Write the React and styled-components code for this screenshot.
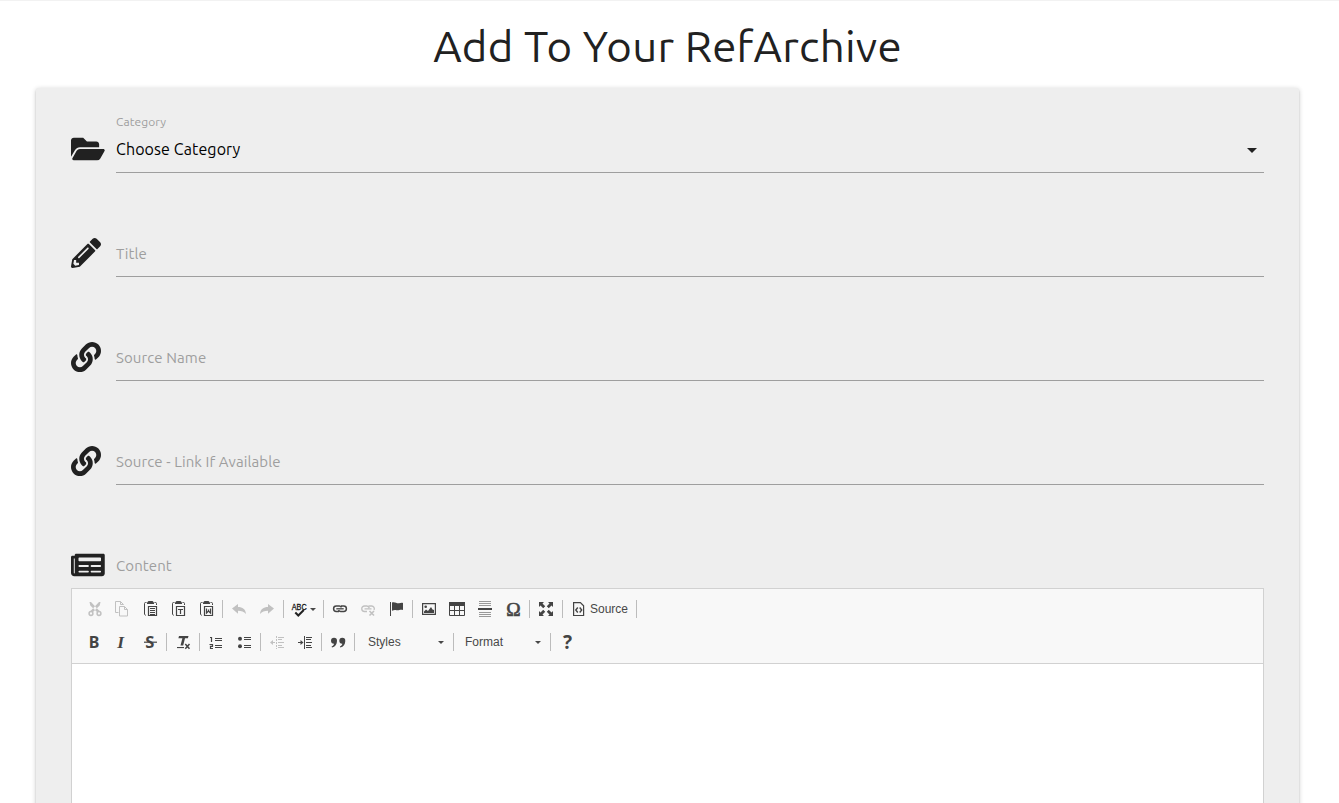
import React from "react";
import styled, { createGlobalStyle } from "styled-components";
import { FaFolderOpen, FaPencilAlt, FaLink, FaNewspaper } from "react-icons/fa";

const GlobalStyle = createGlobalStyle`
  *, *::before, *::after { box-sizing: border-box; }
  html, body { margin: 0; height: 100%; overflow: hidden; background: #fff; }
  body {
    font-family: Ubuntu, "Noto Sans", "Open Sans", sans-serif;
    color: rgba(0, 0, 0, 0.87);
  }
`;

const Page = styled.main`
  height: 803px;
  display: flex;
  flex-direction: column;
  border-top: 1px solid #f2f2f2;
  overflow: hidden;
`;

const PageTitle = styled.h1`
  flex: none;
  margin: 0;
  height: 87px;
  padding: 15px 4px 0 0;
  text-align: center;
  font-size: 43.8px;
  line-height: 60px;
  font-weight: 400;
  letter-spacing: 0.27px;
  color: #212121;
  white-space: nowrap;
`;

const Card = styled.section`
  flex: 0 0 auto;
  height: 900px;
  margin: 0 40px 0 36px;
  padding: 0 35px;
  background: #eee;
  border-radius: 2px;
  box-shadow: 0 2px 2px 0 rgba(0, 0, 0, 0.14), 0 3px 1px -2px rgba(0, 0, 0, 0.12),
    0 1px 5px 0 rgba(0, 0, 0, 0.2);
`;

const Field = styled.div`
  display: flex;
  align-items: flex-end;
  height: ${(p) => p.$height || 104}px;
`;

const Prefix = styled.span`
  flex: 0 0 45px;
  height: ${(p) => (p.$bare ? 38 : 39)}px;
  line-height: 0;
  color: #212121;
  svg {
    height: 30px;
    width: ${(p) => (p.$wide ? 33.75 : 30)}px;
  }
`;

const Control = styled.div`
  flex: 1;
  display: flex;
  flex-direction: column;
  justify-content: flex-end;
  border-bottom: ${(p) => (p.$bare ? "0" : "1px solid #9e9e9e")};
`;

const SmallLabel = styled.label`
  font-size: 12px;
  line-height: 16px;
  color: #9e9e9e;
  letter-spacing: 0.08px;
`;

const Placeholder = styled.label`
  font-size: 15px;
  line-height: 20px;
  padding-bottom: 12px;
  color: #9e9e9e;
  letter-spacing: 0.1px;
`;

const SelectValue = styled.div`
  display: flex;
  align-items: center;
  justify-content: space-between;
  margin-top: 9px;
  padding: 0 7px 13px 0;
  font-size: 16px;
  line-height: 20px;
  color: #000;
  letter-spacing: 0.1px;
`;

const Caret = styled.span`
  width: 0;
  height: 0;
  margin-top: 3px;
  border: 5px solid transparent;
  border-top-color: #212121;
  border-bottom-width: 0;
`;

const Editor = styled.div`
  height: 400px;
  border: 1px solid #d1d1d1;
  background: #fff;
`;

const Toolbar = styled.div`
  height: 75px;
  padding: 7px 8px 0;
  background: #f8f8f8;
  border-bottom: 1px solid #d1d1d1;
`;

const ToolRow = styled.div`
  display: flex;
  align-items: center;
  height: 26px;
  margin-bottom: 7px;
`;

const ToolButton = styled.button`
  display: flex;
  align-items: center;
  width: ${(p) => p.$width || 28}px;
  height: 26px;
  padding: 0 0 0 6px;
  border: 0;
  background: none;
  opacity: ${(p) => (p.$off ? 0.3 : 1)};
  font: 12px "Liberation Sans", Arial, sans-serif;
  color: #484848;
`;

const Separator = styled.span`
  width: 1px;
  height: 18px;
  margin: 0 2px;
  background: #bcbcbc;
`;

const ButtonText = styled.span`
  padding-left: 3px;
`;

const Combo = styled.button`
  display: flex;
  align-items: center;
  justify-content: space-between;
  width: ${(p) => p.$width}px;
  height: 26px;
  padding: 0 ${(p) => p.$right}px 0 ${(p) => p.$left}px;
  border: 0;
  background: none;
  font: 12px "Liberation Sans", Arial, sans-serif;
  color: #484848;
`;

const SmallCaret = styled.span`
  width: 0;
  height: 0;
  margin: 1px 0 0 ${(p) => p.$gap || 0}px;
  border: 3px solid transparent;
  border-top-color: #484848;
  border-bottom-width: 0;
`;

const Glyph = styled.svg`
  display: block;
  flex: 0 0 16px;
  width: 16px;
  height: 16px;
  overflow: visible;
  fill: #444;
  stroke: none;
`;

const line = { fill: "none", stroke: "#444" };
const sans = '"Noto Sans", sans-serif';

const Clipboard = ({ children }) => (
  <>
    <path d="M4.500 1.500h-1a1 1 0 0 0-1 1v10.500l1 1.500M12.500 1.500h1a1 1 0 0 1 1 1V4" {...line} />
    <path d="M5 3V1.500L6.500 0h4L12 1.500V3z" />
    <path d="M6.500 5.500h8v9h-8z" {...line} strokeWidth="1.200" />
    {children}
  </>
);

const glyphs = {
  cut: (
    <>
      <path d="M3.500 1l1.500 0 8.500 9-2 1.600L4.300 4.500zM14.500 1L13 1l-8.500 9 2 1.600 7.200-7.100z" />
      <circle cx="5" cy="12.500" r="1.900" {...line} strokeWidth="1.500" />
      <circle cx="13" cy="12.500" r="1.900" {...line} strokeWidth="1.500" />
    </>
  ),
  copy: (
    <path d="M4.500 11.500H1.500V.5h5l3 3M6.500 .5v3h3M5.500 5.500h5l3 3v6.500h-8zM10.500 5.500v3h3" {...line} />
  ),
  paste: <Clipboard><path d="M8 7.500h5M8 9.500h5M8 11.500h5M8 13.500h5" {...line} /></Clipboard>,
  pasteText: <Clipboard><path d="M8 8.500h5M10.500 8.500V13" {...line} strokeWidth="1.200" /></Clipboard>,
  pasteWord: <Clipboard><path d="M8.500 7.500V12l2-2 2 2V7.500M10.500 8.500V11" {...line} strokeWidth="1.200" /></Clipboard>,
  undo: <path d="M1 7.600L7 3v3c4.500 0 7.500 2 8 7-2-2.700-4.500-3.300-8-3.300v3z" />,
  redo: <path d="M15 7.600L9 3v3c-4.500 0-7.500 2-8 7 2-2.700 4.500-3.300 8-3.300v3z" />,
  spell: (
    <>
      <text
        x="-0.200"
        y="8.500"
        fontSize="9"
        fontWeight="400"
        textLength="14.800"
        lengthAdjust="spacingAndGlyphs"
        fontFamily='"Liberation Sans", sans-serif'
        fill="#111"
        stroke="#111"
        strokeWidth="0.300"
      >
        ABC
      </text>
      <path d="M3.300 11.500l3 3 5.500-5.500" fill="none" stroke="#222" strokeWidth="2" />
    </>
  ),
  link: (
    <>
      <path
        d="M7 10.500H4.300a2.600 2.600 0 0 1 0-5.400h3a2.600 2.600 0 0 1 2.200 1.300M9 5.100h2.700a2.600 2.600 0 0 1 0 5.400h-3a2.600 2.600 0 0 1-2.200-1.300"
        {...line}
        strokeWidth="1.500"
      />
      <path d="M4.300 7.800h7.400" {...line} strokeWidth="1.300" />
    </>
  ),
  unlink: (
    <>
      <path
        d="M7 10.500H4.500a2.700 2.700 0 0 1 0-5.500h2.300a2.700 2.700 0 0 1 2.500 2M8 5.500q.7-.5 1.600-.5h2a2.700 2.700 0 0 1 2.400 4M4.500 7.800h7"
        {...line}
        strokeWidth="1.300"
      />
      <path d="M9.500 10l4.500 4.500M14 10l-4.500 4.500" {...line} strokeWidth="1.600" />
    </>
  ),
  flag: <path d="M2 1h1v14H2zM4 1.500c3-1.300 4.500 1.300 7 .8 1.500-.3 2.500-.8 4-.3v7c-3-1-4 .8-6.500.2C7 8.800 6 8.800 4 9.700z" />,
  image: (
    <>
      <path d="M1.600 2.600h12.800v10.800H1.600z" {...line} strokeWidth="1.200" />
      <circle cx="4.700" cy="5.800" r="1.300" />
      <path d="M3 12v-1.500L5 8.500l2 1.500 3-4 1.500 2.500L13 9v3z" />
    </>
  ),
  table: (
    <>
      <path d="M0 1h16v4H0z" />
      <path d="M.5 4v10.500h15V4M.5 9.500h15M5.500 5v9.500M10.500 5v9.500" {...line} />
    </>
  ),
  rule: (
    <>
      <path d="M2 .5h12M2 2.500h12M2 4.500h12M2 11.500h12M2 13.500h12M2 15.500h12" fill="none" stroke="#999" />
      <path d="M1 7h14v2H1z" />
    </>
  ),
  omega: (
    <text
      x="1.200"
      y="14.800"
      fontSize="18.500"
      fontFamily='"Liberation Serif", serif'
      textLength="14.400"
      lengthAdjust="spacingAndGlyphs"
      stroke="#444"
      strokeWidth="0.600"
    >
      Ω
    </text>
  ),
  maximize: (
    <>
      <path d="M1 1h5L4.500 2.500l3 3-2 2-3-3L1 6zM15 1v5l-1.500-1.500-3 3-2-2 3-3L10 1zM1 15v-5l1.500 1.500 3-3 2 2-3 3L6 15zM15 15h-5l1.500-1.500-3-3 2-2 3 3L15 10z" />
      <path d="M8 4.500L11.500 8 8 11.500 4.500 8z" fill="#f8f8f8" />
    </>
  ),
  source: (
    <>
      <path d="M2.600 1.600h6.800l3.200 3.200v9.700h-10z" {...line} strokeWidth="1.200" />
      <path d="M6.800 6.500L4.800 9l2 2.500M8.700 6.500l2 2.500-2 2.500" {...line} strokeWidth="1.400" />
    </>
  ),
  bold: <text x="2.800" y="13.700" fontSize="16" fontWeight="700" fontFamily={sans}>B</text>,
  italic: (
    <text
      x="3.300"
      y="13.700"
      fontSize="17.500"
      fontWeight="700"
      fontStyle="italic"
      fontFamily='"Liberation Serif", serif'
    >
      I
    </text>
  ),
  strike: (
    <>
      <text x="3.300" y="13.900" fontSize="16.500" fontWeight="700" fontFamily={sans}>S</text>
      <path d="M2 7.600h13v1.200H2z" />
    </>
  ),
  clear: (
    <>
      <path d="M4 2h9.500l-.6 2.200H10L8.200 11.500H5.500l1.900-7.300H3.400z" />
      <path d="M2 13h7v1.100H2z" />
      <path d="M10.300 10l4.200 4.800M14.500 10l-4.200 4.800" stroke="#444" strokeWidth="1.500" />
    </>
  ),
  numbered: (
    <>
      <path d="M7 4.500h7M7 6.500h7M7 11.500h7M7 13.500h7" {...line} />
      <path d="M2 3.500h1.500V8M1.500 10.500h3v1.800H2.500v2.200H5" {...line} strokeWidth="1.200" />
    </>
  ),
  bulleted: (
    <>
      <circle cx="4" cy="4.700" r="2" />
      <circle cx="4" cy="12.300" r="2" />
      <path d="M8 3.500h7M8 5.500h7M8 11.500h7M8 13.500h7" {...line} />
    </>
  ),
  outdent: (
    <>
      <path d="M7.500 2v13" {...line} strokeDasharray="2 1" />
      <path d="M9 3.500h6M9 5.500h4M9 8.500h6M9 11.500h4M9 13.500h6M2 8.500h4" {...line} />
      <path d="M1 8.500L4 6v5z" />
    </>
  ),
  indent: (
    <>
      <path d="M7.500 2v13" {...line} />
      <path d="M9 3.500h6M9 5.500h5M9 8.500h6M9 11.500h5M9 13.500h6M1 8.500h4" {...line} />
      <path d="M6.500 8.500l-3-2.500v5z" />
    </>
  ),
  quote: (
    <path d="M4 3.800a3 3 0 0 1 3 3.100C7 10.200 5.200 12.700 2 13.500l-.4-1c1.500-.7 2.400-1.500 2.400-2.700A3 3 0 0 1 4 3.800zM12.300 3.800a3 3 0 0 1 3 3.100c0 3.300-1.800 5.800-5 6.600l-.4-1c1.500-.7 2.400-1.500 2.400-2.700a3 3 0 0 1 0-6z" />
  ),
  help: <text x="3.900" y="15" fontSize="19" fontWeight="700" fontFamily={sans}>?</text>,
};

const Tool = ({ name, off, width, children }) => (
  <ToolButton type="button" aria-label={name} $off={off} $width={width}>
    <Glyph viewBox="0 0 16 16">{glyphs[name]}</Glyph>
    {children}
  </ToolButton>
);

export default function App() {
  return (
    <>
      <GlobalStyle />
      <Page>
        <PageTitle>Add To Your RefArchive</PageTitle>
        <Card>
          <Field $height={85}>
            <Prefix $wide><FaFolderOpen /></Prefix>
            <Control>
              <SmallLabel>Category</SmallLabel>
              <SelectValue>
                Choose Category
                <Caret />
              </SelectValue>
            </Control>
          </Field>
          <Field>
            <Prefix><FaPencilAlt /></Prefix>
            <Control><Placeholder>Title</Placeholder></Control>
          </Field>
          <Field>
            <Prefix><FaLink /></Prefix>
            <Control><Placeholder>Source Name</Placeholder></Control>
          </Field>
          <Field>
            <Prefix><FaLink /></Prefix>
            <Control><Placeholder>Source - Link If Available</Placeholder></Control>
          </Field>
          <Field $height={103}>
            <Prefix $wide $bare><FaNewspaper /></Prefix>
            <Control $bare><Placeholder>Content</Placeholder></Control>
          </Field>
          <Editor>
            <Toolbar>
              <ToolRow>
                <Tool name="cut" off />
                <Tool name="copy" off />
                <Tool name="paste" />
                <Tool name="pasteText" />
                <Tool name="pasteWord" />
                <Separator />
                <Tool name="undo" off />
                <Tool name="redo" off />
                <Separator />
                <Tool name="spell" width={35}><SmallCaret $gap={2} /></Tool>
                <Separator />
                <Tool name="link" />
                <Tool name="unlink" off />
                <Tool name="flag" />
                <Separator />
                <Tool name="image" />
                <Tool name="table" />
                <Tool name="rule" />
                <Tool name="omega" />
                <Separator />
                <Tool name="maximize" />
                <Separator />
                <Tool name="source" width={69}><ButtonText>Source</ButtonText></Tool>
                <Separator />
              </ToolRow>
              <ToolRow>
                <Tool name="bold" />
                <Tool name="italic" />
                <Tool name="strike" />
                <Separator />
                <Tool name="clear" />
                <Separator />
                <Tool name="numbered" />
                <Tool name="bulleted" />
                <Separator />
                <Tool name="outdent" off />
                <Tool name="indent" />
                <Separator />
                <Tool name="quote" />
                <Separator />
                <Combo type="button" $width={94} $left={11} $right={7}>Styles<SmallCaret /></Combo>
                <Separator />
                <Combo type="button" $width={92} $left={9} $right={7}>Format<SmallCaret /></Combo>
                <Separator />
                <Tool name="help" />
              </ToolRow>
            </Toolbar>
          </Editor>
        </Card>
      </Page>
    </>
  );
}
